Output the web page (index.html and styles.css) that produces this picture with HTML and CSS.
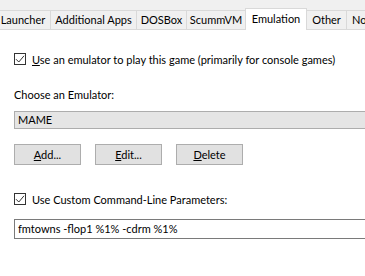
FILE: index.html
```html
<!DOCTYPE html>
<html>
<head>
  <title>Game Properties - Emulation</title>
  <link rel="stylesheet" href="styles.css">
</head>
<body>
  <div class="tabs">
    <div class="tab tab-launcher">Launcher</div>
    <div class="tab tab-apps">Additional Apps</div>
    <div class="tab tab-dosbox">DOSBox</div>
    <div class="tab tab-scummvm">ScummVM</div>
    <div class="tab tab-emulation active">Emulation</div>
    <div class="tab tab-other">Other</div>
    <div class="tab tab-notes">Notes</div>
  </div>

  <div class="page">
    <label class="check-row first">
      <span class="check">
        <svg width="10" height="10" viewBox="0 0 10 10"><path d="M1 5.2 L3.8 8 L9 1.8" fill="none" stroke="#333" stroke-width="1"/></svg>
      </span>
      <span><u>U</u>se an emulator to play this game (primarily for console games)</span>
    </label>

    <div class="field-label">Choose an Emulator:</div>
    <div class="combo">MAME</div>

    <div class="button-row">
      <button class="btn"><u>A</u>dd...</button>
      <button class="btn"><u>E</u>dit...</button>
      <button class="btn"><u>D</u>elete</button>
    </div>

    <label class="check-row second">
      <span class="check">
        <svg width="10" height="10" viewBox="0 0 10 10"><path d="M1 5.2 L3.8 8 L9 1.8" fill="none" stroke="#333" stroke-width="1"/></svg>
      </span>
      <span>Use Custom Command-Line Parameters:</span>
    </label>

    <div class="text-input">fmtowns -flop1 %1% -cdrm %1%</div>
  </div>
</body>
</html>
```

FILE: styles.css
```css
body {
  font-family: Lato, "Liberation Sans", sans-serif;
  font-size: 11px;
  color: #000;
  background-color: #fff;
  margin: 0;
  overflow: hidden;
}

.tabs {
  display: flex;
  align-items: flex-end;
  height: 30px;
  margin-left: -5px;
  background-color: #f0f0f0;
  border-bottom: 1px solid #d9d9d9;
  box-sizing: border-box;
}

.tab {
  flex-shrink: 0;
  height: 19px;
  line-height: 18px;
  text-align: center;
  border: 1px solid #d9d9d9;
  border-bottom: none;
  margin-right: -1px;
  background-color: #f0f0f0;
  white-space: nowrap;
  overflow: hidden;
  box-sizing: border-box;
}

.tab-launcher { width: 56px; }
.tab-apps { width: 87px; }
.tab-dosbox { width: 51px; }
.tab-scummvm { width: 60px; }
.tab-emulation { width: 62px; }
.tab-other { width: 41px; }
.tab-notes { width: 50px; text-align: left; padding-left: 5px; }

.tab.active {
  height: 22px;
  line-height: 20px;
  margin-bottom: -1px;
  background-color: #fff;
  position: relative;
  z-index: 1;
}

.page {
  padding-left: 14px;
}

.check-row {
  display: flex;
  align-items: center;
  gap: 6px;
  height: 12px;
  white-space: nowrap;
}

.check-row.first {
  margin-top: 23px;
}

.check-row.second {
  margin-top: 28px;
}

.check {
  width: 12px;
  height: 12px;
  border: 1px solid #333;
  background-color: #fff;
  box-sizing: border-box;
  display: flex;
  align-items: center;
  justify-content: center;
}

.field-label {
  margin-top: 23px;
  line-height: 14px;
}

.combo {
  margin-top: 9px;
  margin-right: -10px;
  height: 18px;
  line-height: 16px;
  padding-left: 3px;
  border: 1px solid #adadad;
  background-color: #e5e5e5;
  box-sizing: border-box;
}

.button-row {
  display: flex;
  gap: 14px;
  margin-top: 15px;
}

.btn {
  width: 67px;
  height: 21px;
  padding: 0;
  font-family: inherit;
  font-size: inherit;
  color: #000;
  background-color: #e1e1e1;
  border: 1px solid #adadad;
  border-radius: 0;
}

.text-input {
  margin-top: 14px;
  margin-right: -10px;
  height: 20px;
  line-height: 18px;
  padding-left: 3px;
  border: 1px solid #7a7a7a;
  background-color: #fff;
  box-sizing: border-box;
}
```
